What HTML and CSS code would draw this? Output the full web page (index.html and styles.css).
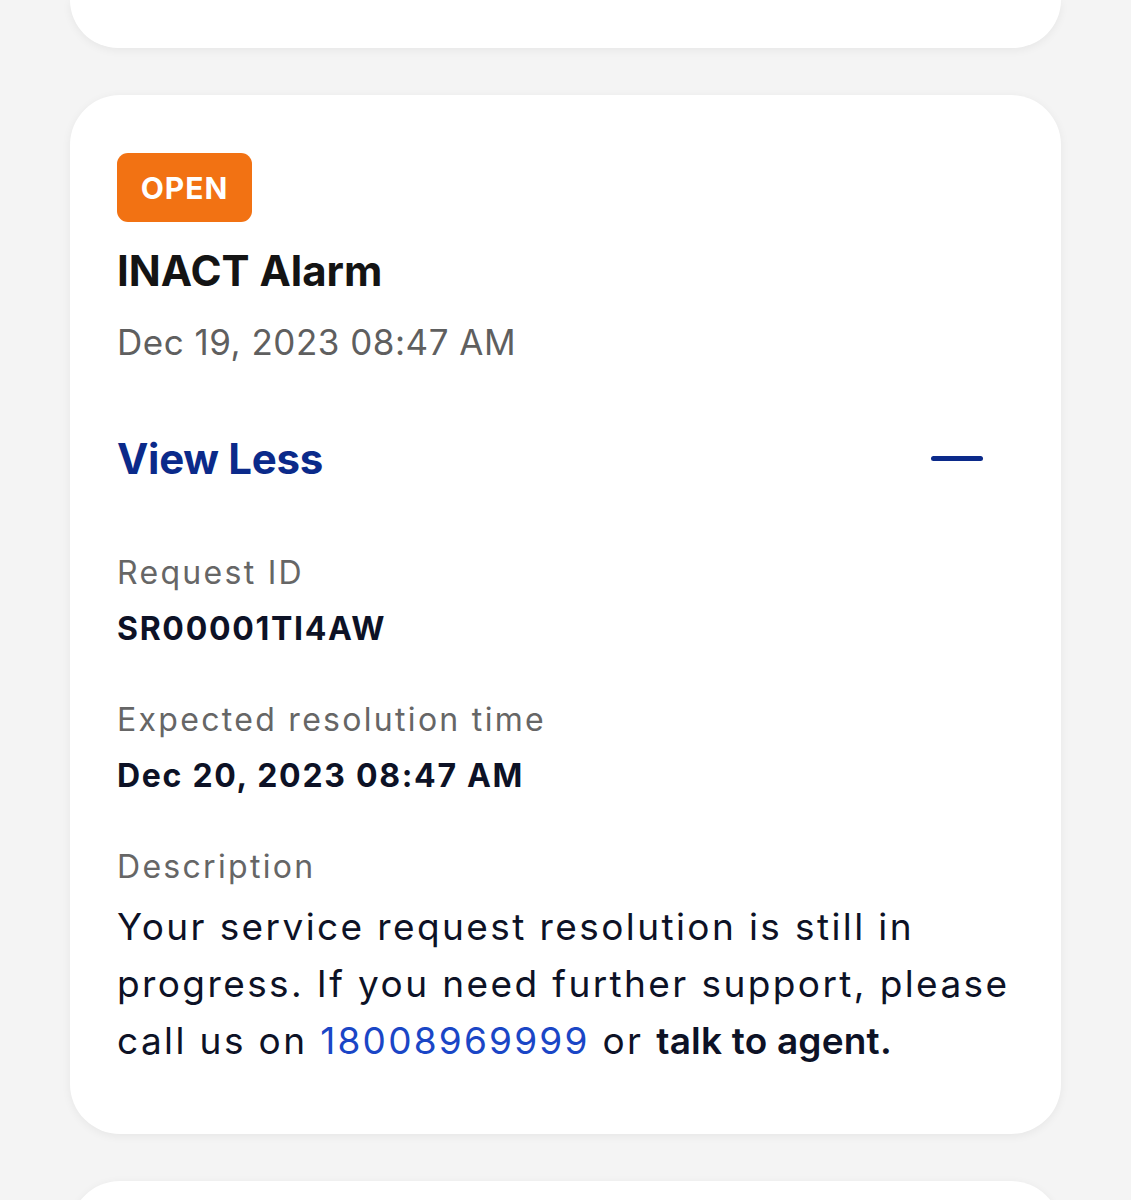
FILE: index.html
```html
<!DOCTYPE html>
<html lang="en">
<head>
<meta charset="utf-8">
<title>Service Request</title>
<link rel="stylesheet" href="styles.css">
</head>
<body>
<div class="page">
  <div class="card card-stub"></div>
  <div class="card main">
    <span class="badge">OPEN</span>
    <h1 class="title">INACT Alarm</h1>
    <div class="date">Dec 19, 2023 08:47 AM</div>
    <div class="toggle">
      <span class="toggle-text">View Less</span>
      <span class="minus"></span>
    </div>
    <div class="field">
      <div class="label">Request ID</div>
      <div class="value">SR00001TI4AW</div>
    </div>
    <div class="field">
      <div class="label">Expected resolution time</div>
      <div class="value">Dec 20, 2023 08:47 AM</div>
    </div>
    <div class="field">
      <div class="label">Description</div>
      <p class="desc">Your service request resolution is still in progress. If you need further support, please call us on <a class="phone" href="#">18008969999</a> or <b class="agent">talk to agent.</b></p>
    </div>
  </div>
  <div class="card card-next"></div>
</div>
</body>
</html>
```
FILE: styles.css
```css
html, body {
  margin: 0;
  padding: 0;
  background: #f4f4f4;
}
body {
  font-family: Inter, "Noto Sans", "Liberation Sans", sans-serif;
  height: 1200px;
  overflow: hidden;
}
.page {
  padding: 0 70px 0 70px;
  display: flex;
  flex-direction: column;
}
.card {
  background: #ffffff;
  border-radius: 50px;
  box-shadow: 0 2px 10px rgba(0, 0, 0, 0.06);
}
.card-stub {
  height: 48px;
  border-radius: 0 0 50px 50px;
}
.main {
  margin-top: 47px;
  padding: 58px 47px 65px 47px;
  display: flex;
  flex-direction: column;
  align-items: flex-start;
}
.card-next {
  margin-top: 47px;
  height: 100px;
}
.badge {
  display: inline-flex;
  align-items: center;
  justify-content: center;
  width: 135px;
  height: 69px;
  box-sizing: border-box;
  border-radius: 11px;
  background: #f27213;
  color: #ffffff;
  font-weight: 700;
  font-size: 30px;
  letter-spacing: 1px;
}
.title {
  margin: 21px 0 0 0;
  font-size: 42px;
  line-height: 56px;
  font-weight: 700;
  color: #141414;
}
.date {
  margin-top: 19px;
  font-size: 35px;
  line-height: 48px;
  letter-spacing: 0.5px;
  color: #5f5f5f;
}
.toggle {
  margin-top: 62px;
  align-self: stretch;
  display: flex;
  align-items: center;
  justify-content: space-between;
  height: 60px;
  padding-right: 31px;
}
.toggle-text {
  font-size: 42px;
  font-weight: 700;
  color: #0b2a8a;
  letter-spacing: -0.3px;
}
.minus {
  width: 52px;
  height: 5px;
  border-radius: 3px;
  background: #0b2a8a;
}
.field {
  display: flex;
  flex-direction: column;
}
.toggle + .field {
  margin-top: 61px;
}
.field + .field {
  margin-top: 43px;
}
.label {
  font-size: 32px;
  line-height: 48px;
  letter-spacing: 2.3px;
  color: #666666;
}
.value {
  margin-top: 8px;
  font-size: 32px;
  line-height: 48px;
  letter-spacing: 1.7px;
  font-weight: 700;
  color: #0d1226;
}
.desc {
  margin: 7px 0 0 0;
  font-size: 37px;
  line-height: 57px;
  letter-spacing: 2.4px;
  color: #0d1226;
}
.phone {
  color: #1a46c6;
  text-decoration: none;
  letter-spacing: 2.2px;
}
.agent {
  font-weight: 600;
  letter-spacing: 0.2px;
}
```
